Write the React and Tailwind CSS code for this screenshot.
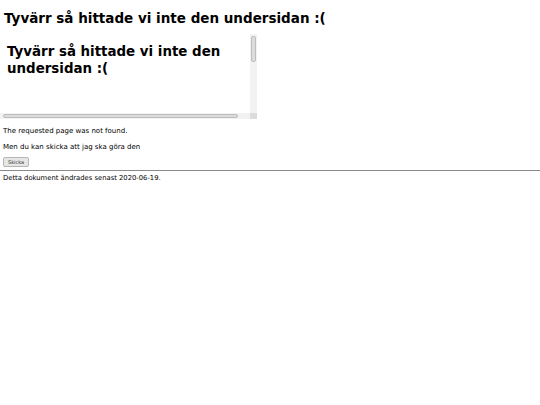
export default function App() {
  return (
    <div className="min-h-[405px] bg-white text-black" style={{ fontFamily: '"DejaVu Sans", Verdana, sans-serif' }}>
      <h1 className="px-[4px] pt-[9px] text-[13.5px] font-bold leading-[18px]">Tyvärr så hittade vi inte den undersidan :(</h1>
      <div className="mt-[7px] flex h-[85px] w-[257px] flex-col">
        <div className="flex flex-1 overflow-hidden">
          <div className="flex-1 overflow-hidden px-[7px] pt-[9px]">
            <h2 className="text-[13.4px] font-bold leading-[17px]">Tyvärr så hittade vi inte den undersidan :(</h2>
          </div>
          <div className="flex w-[7px] flex-col bg-[#f2f2f2] px-[1px] pt-[2px]">
            <div className="h-[26px] rounded-[2px] border border-[#bdbdbd] bg-[#dcdcdc]" />
          </div>
        </div>
        <div className="flex h-[6px]">
          <div className="flex flex-1 items-center bg-[#f2f2f2] pl-[3px] pr-[12px]">
            <div className="h-[4px] flex-1 rounded-[2px] border border-[#bdbdbd] bg-[#dcdcdc]" />
          </div>
          <div className="w-[7px] bg-[#dcdcdc]" />
        </div>
      </div>
      <div className="px-[3px] pt-[8px] text-[7px] leading-[9px]">
        <p>The requested page was not found.</p>
        <p className="mt-[7px]">Men du kan skicka att jag ska göra den</p>
        <button className="mt-[5px] h-[10px] w-[26px] rounded-[2px] border border-[#b5b5b5] bg-[#e6e6e6] text-[5px] leading-none text-[#333]">Skicka</button>
      </div>
      <hr className="mt-[3px] border-t border-[#8a8a8a]" />
      <p className="px-[3px] pt-[3px] text-[6.8px] leading-[9px]">Detta dokument ändrades senast 2020-06-19.</p>
    </div>
  )
}
